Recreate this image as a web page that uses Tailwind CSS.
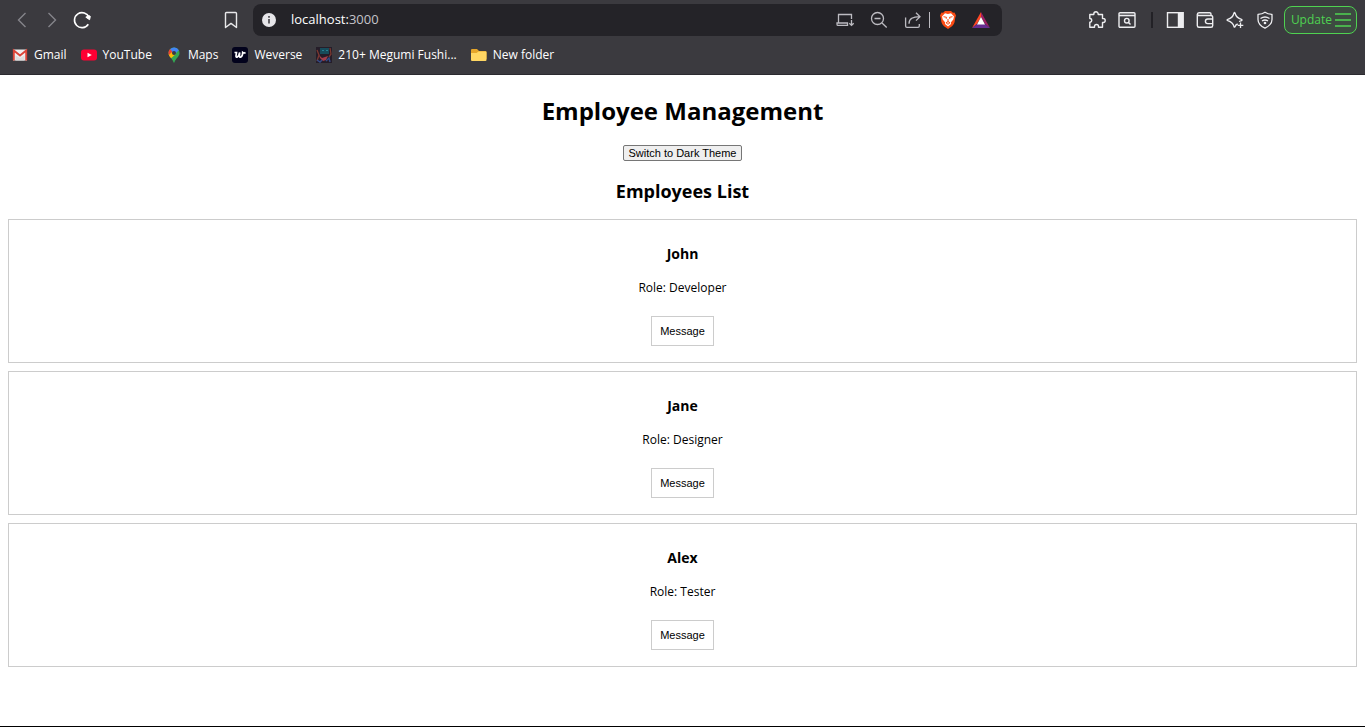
<!DOCTYPE html>
<html lang="en">
<head>
<meta charset="utf-8">
<meta name="viewport" content="width=device-width, initial-scale=1">
<title>Employee Management</title>
<script src="https://cdn.jsdelivr.net/npm/@tailwindcss/browser@4"></script>
</head>
<body class="flex min-h-screen flex-col border-b border-black bg-white font-['Segoe_UI','Open_Sans',sans-serif] text-black">
<header class="border-b border-[#2b2a2f] bg-[#3b3a3f] text-white">
  <div class="flex h-10 items-center pr-2 pl-3">
    <nav aria-label="Navigation" class="flex w-[241px] items-center gap-2.5">
      <button aria-label="Back" class="text-[#85848a]"><svg class="size-5" viewBox="0 0 20 20" fill="none" stroke="currentColor" stroke-width="1.4"><path d="M13.5 3 6.5 10l7 7"/></svg></button>
      <button aria-label="Forward" class="text-[#85848a]"><svg class="size-5" viewBox="0 0 20 20" fill="none" stroke="currentColor" stroke-width="1.4"><path d="m6.500 3 7 7-7 7"/></svg></button>
      <button aria-label="Reload"><svg class="size-5" viewBox="0 0 20 20" fill="none" stroke="currentColor" stroke-width="1.6"><path d="M16.300 14.200A7.500 7.500 0 1 1 17 7.500"/><path d="M13.800 7.200 16.800 5.500 18.300 6.300 17.600 9.700Z" fill="currentColor" stroke-width="1"/></svg></button>
      <button aria-label="Bookmark this tab" class="mr-3 ml-auto"><svg class="size-5" viewBox="0 0 20 20" fill="none" stroke="#e8e8ea" stroke-width="1.400" stroke-linejoin="round"><path d="M4.500 3.500q0-1 1-1h9q1 0 1 1v14L10 13.400 4.500 17.500Z"/></svg></button>
    </nav>
    <div class="mr-[85px] flex h-8 flex-1 items-center rounded-lg bg-[#242328] pr-3 pl-2">
      <button aria-label="Site information"><svg class="size-4" viewBox="0 0 16 16"><circle cx="8" cy="8" r="7" fill="#e6e5e9"/><path d="M8 7v4.500M8 4v1.700" stroke="#343338" stroke-width="1.500"/></svg></button>
      <div class="ml-3.5 flex-1 text-[13px]" role="textbox" aria-label="Address">localhost:<span class="text-[#c5c4ca]">3000</span></div>
      <div class="flex items-center text-[#bcbbc1]">
        <button aria-label="Install app"><svg class="size-5" viewBox="0 0 20 20" fill="none" stroke="currentColor" stroke-width="1.300"><path d="M16.500 9V4.500h-13v8M2 13h10.500v2.400H3Q2 15.400 2 14.200ZM16.500 10v5M14.300 13.200l2.200 2.200 2.200-2.200"/></svg></button>
        <button aria-label="Zoom" class="ml-3.5"><svg class="size-5" viewBox="0 0 20 20" fill="none" stroke="currentColor" stroke-width="1.300"><circle cx="8.500" cy="8.500" r="6"/><path d="M5.500 8.500h6M13 13l4.700 4.500"/></svg></button>
        <button aria-label="Share" class="ml-3.5"><svg class="size-5" viewBox="0 0 20 20" fill="none" stroke="currentColor" stroke-width="1.300"><path d="M2.600 7.500V16q0 1.300 1.300 1.300H15q1.300 0 1.300-1.300v-2M6 13.700C6 8.800 9.700 6.700 16.700 6.700M13 2.800l4 3.900-4 3.900"/></svg></button>
        <span class="ml-1.5 h-4 w-px bg-[#bcbbc1]"></span>
        <button aria-label="Brave Shields" class="ml-2.5"><svg class="h-[18px] w-4" viewBox="0 0 16 18"><path d="m5 0-2 1.800-1.500-.2L0 4.600.8 7l.6 4q.5 2.500 2.600 4.200L8 18l4-2.800q2.100-1.700 2.600-4.200l.6-4 .8-2.400-1.500-3-1.500.2L11 0Z" fill="#fb4b14"/><path d="m8 3-3-.7L2 5.400l.7 3 2.500 3L5 13l3 2.600L11 13l-.2-1.600 2.500-3 .7-3-3-3.100Z" fill="#fff"/><path d="m3.500 5.700 3 .6-.3 1.500M12.500 5.700l-3 .6.3 1.500M8 8v3M6 11.700l2-1 2 1-2 1.600Z" fill="none" stroke="#fb4b14"/></svg></button>
        <button aria-label="Brave Rewards" class="ml-4"><svg class="h-4 w-[18px]" viewBox="0 0 18 16"><path d="M9 0v5l-4 7-5 4Z" fill="#ff4724"/><path d="m9 0 9 16-5-4-4-7Z" fill="#9e1f63"/><path d="M0 16h18l-5-4H5Z" fill="#662d91"/><path d="m9 5 4 7.500H5Z" fill="#fff"/></svg></button>
      </div>
    </div>
    <div class="flex items-center justify-end text-[#ededf0]">
      <button aria-label="Extensions"><svg class="size-5" viewBox="0 0 20 20" fill="none" stroke="currentColor" stroke-width="1.400" stroke-linejoin="round"><path d="M2.800 4.500h4V4a2.200 2.200 0 0 1 4.400 0v.5h4.300v4h.7a2 2 0 0 1 0 4h-.7v4.700h-4v-.7a2 2 0 0 0-4 0v.7H2.800v-5h.5a1.900 1.900 0 0 0 0-3.700h-.5Z"/></svg></button>
      <button aria-label="Search tabs" class="ml-2.5"><svg class="size-5" viewBox="0 0 20 20" fill="none" stroke="currentColor" stroke-width="1.400"><rect x="2" y="2.700" width="16" height="14.600" rx="1"/><path d="M2 5.500h16" stroke-width="1.600"/><circle cx="9.800" cy="10.700" r="2.300"/><path d="m11.500 12.400 2 2"/></svg></button>
      <span class="ml-3.5 h-4 w-0.5 bg-[#222126]"></span>
      <button aria-label="Sidebar" class="ml-3"><svg class="size-5" viewBox="0 0 20 20" fill="none" stroke="currentColor" stroke-width="1.400"><rect x="2.500" y="2.700" width="15.500" height="14.600"/><path d="M13.500 2.700H18v14.600h-4.500Z" fill="currentColor"/></svg></button>
      <button aria-label="Wallet" class="ml-2.5"><svg class="size-5" viewBox="0 0 20 20" fill="none" stroke="currentColor" stroke-width="1.400"><path d="M16 5.500V4q0-1.300-1.300-1.300H4Q2.300 2.700 2.300 4.500v11q0 1.800 1.700 1.800h12q1.700 0 1.700-1.800v-8q0-2-1.700-2H4.500Q2.500 5.500 2.300 4.500M17.700 9h-5a2.300 2.300 0 0 0 0 4.600h5"/></svg></button>
      <button aria-label="Leo AI" class="ml-2.5"><svg class="size-5" viewBox="0 0 20 20" fill="none" stroke="currentColor" stroke-width="1.300" stroke-linejoin="round"><path d="M12.700 14q-2 .5-2.700 2.700-.5 1-1 0Q8 12.300 2.800 10.700q-1.500-.7 0-1.400Q7.800 8 9 3q.5-1 1 0 1.300 5 6.500 6.300 1 .5 0 1.400L14 11.500M15.500 12.500v5.500M12.700 15.300h5.600"/></svg></button>
      <button aria-label="VPN" class="ml-2.5"><svg class="size-5" viewBox="0 0 20 20" fill="none" stroke="currentColor" stroke-width="1.300" stroke-linejoin="round"><path d="M10 2.200c2 1.400 4.500 2 7 2.200v5c0 4-3 6.800-7 8.800-4-2-7-4.800-7-8.800v-5c2.500-.2 5-.8 7-2.200Z"/><path d="M5.500 8.500q4.500-3 9 0M7 11q3-2 6 0"/><circle cx="10" cy="13" r=".7" fill="currentColor"/></svg></button>
      <button class="ml-[9px] flex h-7 items-center gap-0.5 rounded-lg border border-[#4fd251] bg-[#3d4a41] pr-1 pl-1.5 text-xs text-[#4fd251]">Update<svg class="h-4 w-[18px]" viewBox="0 0 18 16" fill="none" stroke="currentColor" stroke-width="1.600"><path d="M1 2h16M1 8h16M1 14h16"/></svg></button>
    </div>
  </div>
  <nav aria-label="Bookmarks" class="flex h-[34px] items-center gap-3.5 pb-1 pl-3 text-xs whitespace-nowrap">
    <a href="#" class="flex items-center gap-1.5"><svg class="size-4" viewBox="0 0 16 16"><path d="M1 2.500h14v11H1Z" fill="#eee"/><path d="M3.500 13.500v-5L8 11l4.500-2.500v5Z" fill="#ddd"/><path d="M1.800 13.500v-10L8 8.500l6.200-5v10" fill="none" stroke="#db4437" stroke-width="1.900"/></svg>Gmail</a>
    <a href="#" class="flex items-center gap-1.5"><svg class="size-4" viewBox="0 0 16 16"><rect y="2.500" width="16" height="11" rx="3" fill="#ff0033"/><path d="m6.500 5.700 4.300 2.300-4.300 2.300Z" fill="#fff"/></svg>YouTube</a>
    <a href="#" class="flex items-center gap-1.5"><svg class="size-4" viewBox="0 0 16 16"><path d="M8 .5a5.500 5.500 0 0 1 5.500 5.500c0 4-4.300 5.500-5 9.500h-1C6.800 11.500 2.500 10 2.500 6A5.500 5.500 0 0 1 8 .5Z" fill="#34a853"/><path d="M2.500 6q0 2.500 2 4.300L10 4 4 2.300Q2.500 4 2.500 6Z" fill="#ea4335"/><path d="M2.700 7.300q.3 2 2.400 4L9.800 7 6 5Z" fill="#fbbc04"/><path d="M4 2.300a5.500 5.500 0 0 1 8.800 1L8 8Z" fill="#4285f4"/><path d="m4 2.300 2.300 2L3 8Q2 4.500 4 2.300Z" fill="#ea4335"/><circle cx="8" cy="6" r="2" fill="#3b3a3f"/></svg>Maps</a>
    <a href="#" class="flex items-center gap-1.5"><svg class="size-4" viewBox="0 0 16 16"><rect width="16" height="16" rx="3" fill="#02021c"/><path d="M2.500 5.500h2L4 9q0 1.500 1.400 1 1.500-.8 2.300-4.500L7.400 9q0 1.500 1.500 1 1.800-1 1.800-4.500 1.300 1 2.800 0" fill="none" stroke="#fff" stroke-width="1.700"/></svg>Weverse</a>
    <a href="#" class="flex items-center gap-1.5"><svg class="size-4" viewBox="0 0 16 16"><path d="M0 0h16v16H0Z" fill="#251d29"/><path d="M4 1h9v6H4Z" fill="#174c5b"/><path d="M6 3h2v1H6ZM10 3h2v1h-2Z" fill="#268094"/><path d="m1 3 2 5-2 6M14 1l1 6-2 3" fill="none" stroke="#7c382f" stroke-width="1.300"/><path d="m3 8 3 3 6-2-2 4-3 1-3-3Z" fill="#a33d4b"/><path d="m1 13 3 2 2-2M10 14l3-3 1 4" fill="none" stroke="#344b88" stroke-width="1.400"/></svg>210+ Megumi Fushi...</a>
    <a href="#" class="flex items-center gap-1.5"><svg class="size-4" viewBox="0 0 16 16"><path d="M0 3q0-1 1-1h5l2 2h6.500q1 0 1 1v7H0Z" fill="#e5a52a"/><path d="M0 6h5.500l2-1.500h7q1 0 1 1V13q0 1-1 1H1q-1 0-1-1Z" fill="#ffd663"/></svg>New folder</a>
  </nav>
</header>
<main class="px-2 pt-[18px] text-center">
  <h1 class="text-2xl/9 font-bold">Employee Management</h1>
  <button class="mx-auto mt-4 block h-4 rounded-xs border border-[#767676] bg-[#efefef] px-1 font-['Liberation_Sans',sans-serif] text-[11px]/[14px]">Switch to Dark Theme</button>
  <h2 class="mt-[18px] text-lg/6 font-bold">Employees List</h2>
  <ul class="mt-4 grid gap-2">
    <li class="border border-[#ccc] pt-6 pb-4">
      <h3 class="text-sm/5 font-bold">John</h3>
      <p class="mt-3.5 text-xs/5">Role: Developer</p>
      <button class="mx-auto mt-[18px] block h-[30px] border border-[#ccc] bg-white px-2 font-['Liberation_Sans',sans-serif] text-[11px]">Message</button>
    </li>
    <li class="border border-[#ccc] pt-6 pb-4">
      <h3 class="text-sm/5 font-bold">Jane</h3>
      <p class="mt-3.5 text-xs/5">Role: Designer</p>
      <button class="mx-auto mt-[18px] block h-[30px] border border-[#ccc] bg-white px-2 font-['Liberation_Sans',sans-serif] text-[11px]">Message</button>
    </li>
    <li class="border border-[#ccc] pt-6 pb-4">
      <h3 class="text-sm/5 font-bold">Alex</h3>
      <p class="mt-3.5 text-xs/5">Role: Tester</p>
      <button class="mx-auto mt-[18px] block h-[30px] border border-[#ccc] bg-white px-2 font-['Liberation_Sans',sans-serif] text-[11px]">Message</button>
    </li>
  </ul>
</main>
</body>
</html>
